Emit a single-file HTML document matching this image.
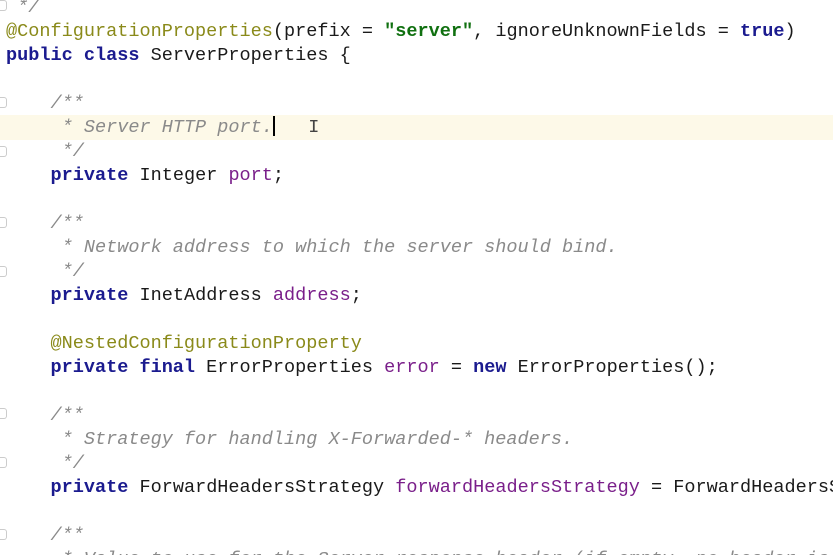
<!DOCTYPE html>
<html><head><meta charset="utf-8"><style>
html,body{margin:0;padding:0;width:833px;height:555px;overflow:hidden;background:#fff;position:relative}
.c{position:absolute;left:6px;top:-4px;width:827px;overflow:hidden;font-family:"Liberation Mono",monospace;font-size:18.55px;line-height:24px;color:#1a1a1a}
.l{height:24px;white-space:pre}
.hl{position:absolute;left:0;top:115px;width:833px;height:25px;background:#fdf9e8}
.k{color:#1b1b8f;font-weight:bold}
.a{color:#8a8a1a}
.s{color:#107010;font-weight:bold}
.cm{color:#8a8a8a;font-style:italic}
.f{color:#7a1f8a}
.g{position:absolute;left:0;width:6px;height:9px;border:1px solid #ccc;border-left:none;border-radius:0 3px 3px 0}
.cur{display:inline-block;width:2px;height:20px;background:#000;vertical-align:-4px}
</style></head><body>
<div class="hl"></div>
<div class="g" style="top:0"></div>
<div class="g" style="top:97px"></div>
<div class="g" style="top:146px"></div>
<div class="g" style="top:217px"></div>
<div class="g" style="top:266px"></div>
<div class="g" style="top:408px"></div>
<div class="g" style="top:457px"></div>
<div class="g" style="top:529px"></div>
<div class="c">
<div class="l"><span class="cm"> */</span></div>
<div class="l"><span class="a">@ConfigurationProperties</span>(prefix = <span class="s">"server"</span>, ignoreUnknownFields = <span class="k">true</span>)</div>
<div class="l"><span class="k">public class</span> ServerProperties {</div>
<div class="l"> </div>
<div class="l"><span class="cm">    /**</span></div>
<div class="l"><span class="cm">     * Server HTTP port.</span><span class="cur"></span>   <span style="color:#444">I</span></div>
<div class="l"><span class="cm">     */</span></div>
<div class="l">    <span class="k">private</span> Integer <span class="f">port</span>;</div>
<div class="l"> </div>
<div class="l"><span class="cm">    /**</span></div>
<div class="l"><span class="cm">     * Network address to which the server should bind.</span></div>
<div class="l"><span class="cm">     */</span></div>
<div class="l">    <span class="k">private</span> InetAddress <span class="f">address</span>;</div>
<div class="l"> </div>
<div class="l">    <span class="a">@NestedConfigurationProperty</span></div>
<div class="l">    <span class="k">private final</span> ErrorProperties <span class="f">error</span> = <span class="k">new</span> ErrorProperties();</div>
<div class="l"> </div>
<div class="l"><span class="cm">    /**</span></div>
<div class="l"><span class="cm">     * Strategy for handling X-Forwarded-* headers.</span></div>
<div class="l"><span class="cm">     */</span></div>
<div class="l">    <span class="k">private</span> ForwardHeadersStrategy <span class="f">forwardHeadersStrategy</span> = ForwardHeadersStrategy.NONE;</div>
<div class="l"> </div>
<div class="l"><span class="cm">    /**</span></div>
<div class="l"><span class="cm">     * Value to use for the Server response header (if empty, no header is sent).</span></div>
</div>
</body></html>
